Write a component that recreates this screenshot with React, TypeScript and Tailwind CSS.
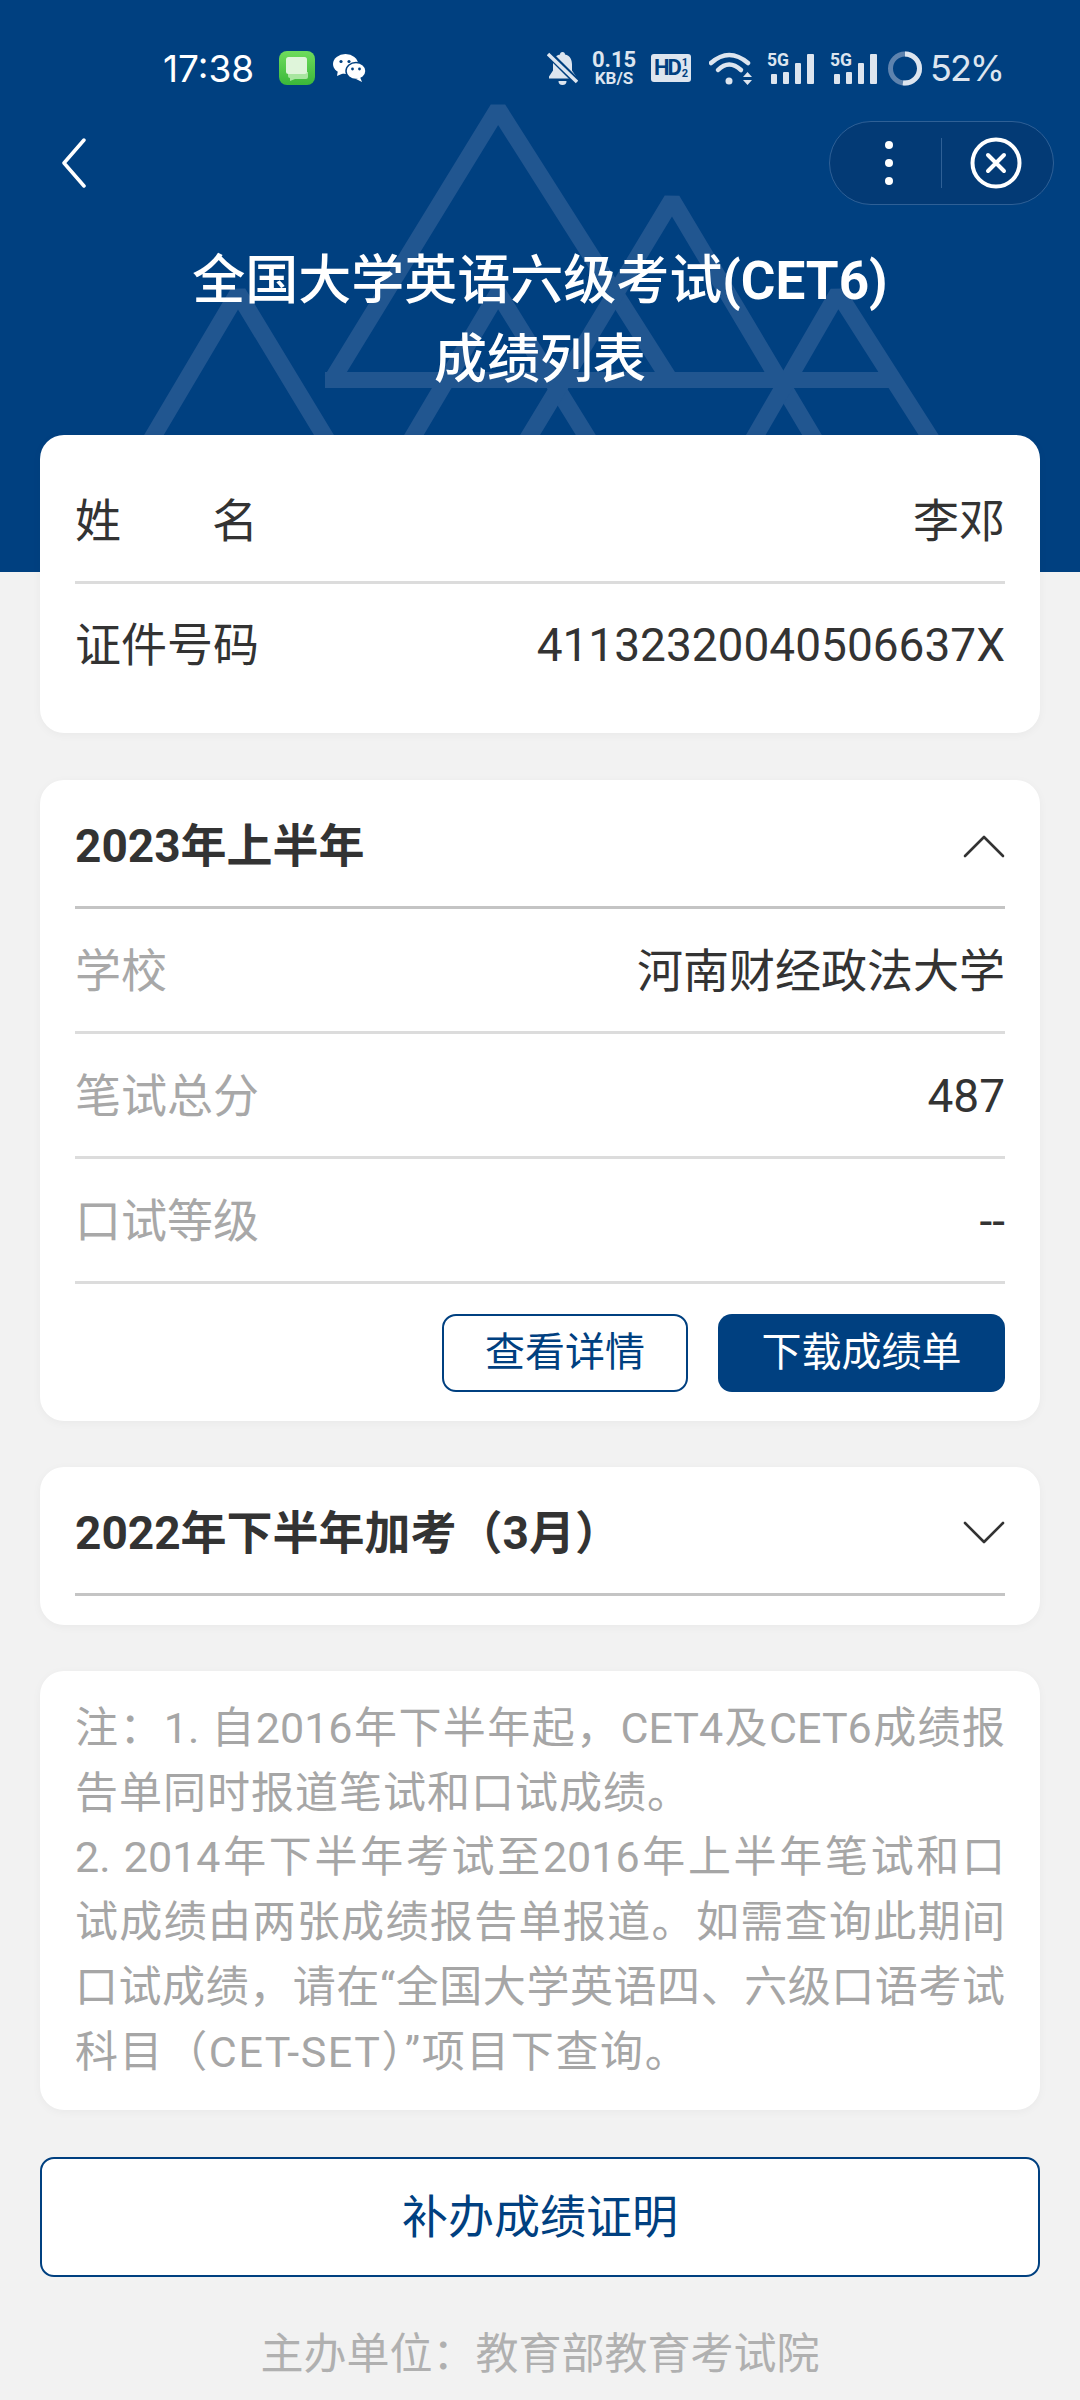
const NAVY = '#004080';

function MessageIcon() {
  return (
    <svg width="36" height="34" viewBox="0 0 36 34">
      <defs>
        <linearGradient id="msg" x1="0" y1="0" x2="0" y2="1">
          <stop offset="0" stopColor="#6fdc5c" />
          <stop offset="1" stopColor="#3bb83a" />
        </linearGradient>
      </defs>
      <rect width="36" height="34" rx="8" fill="url(#msg)" />
      <path d="M9 21 h20 v5 a2 2 0 0 1 -2 2 h-11 l-5 2 v-3 a2 2 0 0 1 -2 -2z" fill="#a8e6a0" />
      <rect x="7" y="6" width="21" height="17" rx="2.5" fill="#dff5da" />
    </svg>
  );
}

function WechatIcon() {
  return (
    <svg width="33" height="28" viewBox="0 0 33 28">
      <ellipse cx="12.5" cy="10" rx="12.5" ry="10" fill="#fff" />
      <path d="M5 16 l-1 6 l7 -3z" fill="#fff" />
      <ellipse cx="23" cy="17" rx="10" ry="8.5" fill="#fff" stroke={NAVY} strokeWidth="1.5" />
      <path d="M27 23 l2 5 l-6 -3z" fill="#fff" />
      <circle cx="8" cy="7.5" r="1.6" fill={NAVY} />
      <circle cx="16" cy="7.5" r="1.6" fill={NAVY} />
      <circle cx="19.5" cy="15" r="1.4" fill={NAVY} />
      <circle cx="26.5" cy="15" r="1.4" fill={NAVY} />
    </svg>
  );
}

function BellOffIcon() {
  return (
    <svg width="31" height="33" viewBox="0 0 31 33">
      <path d="M15.5 0 a2.5 2.5 0 0 1 2.5 2.5 c5 1 7 5 7 10 v6 l4 6 v2 h-27 v-2 l4 -6 v-6 c0 -5 2 -9 7 -10 a2.5 2.5 0 0 1 2.5 -2.5z" fill="#dde5ef" />
      <path d="M11.5 29 h8 a4 4 0 0 1 -8 0z" fill="#dde5ef" />
      <line x1="0" y1="0" x2="31" y2="31" stroke={NAVY} strokeWidth="7" />
      <line x1="1" y1="2" x2="30" y2="30" stroke="#dde5ef" strokeWidth="3.5" />
    </svg>
  );
}

function WifiIcon() {
  return (
    <svg width="43" height="33" viewBox="0 0 43 33" fill="none" stroke="#dde5ef" strokeLinecap="round">
      <path d="M2 11 Q20 -5 39 11" strokeWidth="4.5" />
      <path d="M9 18 Q20 7 32 18" strokeWidth="4.5" />
      <circle cx="20" cy="29" r="3.5" fill="#dde5ef" stroke="none" />
      <path d="M34 25 l4.5 -5 l4.5 5z M34 28 l4.5 5 l4.5 -5z" fill="#dde5ef" stroke="none" />
    </svg>
  );
}

function SignalIcon() {
  return (
    <svg className="overflow-visible" width="47" height="33" viewBox="0 0 47 33" fill="#dde5ef">
      <text x="0" y="14" fontSize="19" fontWeight="700" fontFamily="Roboto" textLength="22" lengthAdjust="spacingAndGlyphs">5G</text>
      <rect x="4" y="22" width="6" height="10" rx="1" />
      <rect x="16" y="20" width="6" height="12" rx="1" />
      <rect x="28" y="11" width="6" height="21" rx="1" />
      <rect x="40" y="2" width="7" height="30" rx="1" />
    </svg>
  );
}

function BatteryRing() {
  return (
    <svg width="34" height="35" viewBox="0 0 34 35" fill="none" strokeWidth="5">
      <circle cx="17" cy="17.5" r="14.5" stroke="#5e83ae" />
      <circle
        cx="17"
        cy="17.5"
        r="14.5"
        stroke="#dde5ef"
        strokeDasharray="47.4 91.1"
        transform="rotate(-90 17 17.5)"
      />
    </svg>
  );
}

function StatusBar() {
  return (
    <div className="flex items-center justify-between h-[48px] mt-[44px] pl-[163px] pr-[80px]">
      <div className="flex items-center">
        <span className="text-[37px] leading-none text-white font-['Inter',sans-serif] w-[116px]">17:38</span>
        <MessageIcon />
        <div className="ml-[18px]">
          <WechatIcon />
        </div>
      </div>
      <div className="flex items-center text-[#dde5ef]">
        <BellOffIcon />
        <div className="flex flex-col items-center w-[44px] ml-[14px] font-bold font-['Roboto',sans-serif]">
          <span className="text-[22px] leading-[20px]">0.15</span>
          <span className="text-[17px] leading-[17px]">KB/S</span>
        </div>
        <div className="flex items-center justify-center w-[40px] h-[28px] ml-[15px] rounded-[3px] bg-[#dde5ef] text-[#004080] font-bold font-['Roboto',sans-serif]">
          <span className="text-[22px] leading-none tracking-[-2px]">HD</span>
          <span className="flex flex-col text-[11px] leading-[11px] ml-[2px]">
            <span>1</span>
            <span>2</span>
          </span>
        </div>
        <div className="ml-[18px]">
          <WifiIcon />
        </div>
        <div className="ml-[15px]">
          <SignalIcon />
        </div>
        <div className="ml-[16px]">
          <SignalIcon />
        </div>
        <div className="ml-[11px]">
          <BatteryRing />
        </div>
        <span className="ml-[8px] w-[70px] text-[36px] leading-none tracking-[-2px] font-['Inter',sans-serif]">52%</span>
      </div>
    </div>
  );
}

function NavBar() {
  return (
    <div className="flex items-center justify-between h-[84px] mt-[29px] pl-[62px] pr-[26px]">
      <svg width="24" height="50" viewBox="0 0 24 50" fill="none" stroke="#fff" strokeWidth="3.5" strokeLinecap="round" strokeLinejoin="round">
        <path d="M22 2 L2 25 L22 48" />
      </svg>
      <div className="flex items-center w-[225px] h-[84px] rounded-full border border-[#2f6096] bg-[#033a75]">
        <div className="flex flex-col items-center gap-[10px] w-[118px] -mr-[7px]">
          <span className="w-2 h-2 rounded-full bg-white" />
          <span className="w-2 h-2 rounded-full bg-white" />
          <span className="w-2 h-2 rounded-full bg-white" />
        </div>
        <div className="w-px h-[50px] bg-[#2f6096]" />
        <svg className="ml-[28px]" width="52" height="52" viewBox="0 0 52 52" fill="none" stroke="#fff">
          <circle cx="26" cy="26" r="23.5" strokeWidth="4" />
          <path d="M18 18 L34 34 M34 18 L18 34" strokeWidth="4" strokeLinecap="round" />
        </svg>
      </div>
    </div>
  );
}

function Triangles() {
  return (
    <svg className="absolute inset-0" width="1080" height="572" viewBox="0 0 1080 572" fill="none" stroke="#215690" strokeWidth="17" strokeLinejoin="bevel">
      <path d="M148 445 L238 293 L330 445" />
      <path d="M408 445 L498 293 L592 445" />
      <path d="M332 380 L498 109 L670 380" />
      <path d="M524 445 L672 200 L818 445" />
      <path d="M750 445 L838 293 L935 445" />
      <path d="M325 380 H897" strokeWidth="16" />
    </svg>
  );
}

function Row({ label, value, muted }: { label: React.ReactNode; value: string; muted?: boolean }) {
  return (
    <div className="flex items-center justify-between h-[125px] pt-[2px] border-b-[3px] border-[#dcdcdc]">
      <span className={muted ? 'text-[#a8a8a8]' : 'text-[#333]'}>{label}</span>
      <span className="text-[#333]">{value}</span>
    </div>
  );
}

function SectionHeader({ title, open }: { title: string; open?: boolean }) {
  return (
    <div className="flex items-center justify-between h-[129px] pt-[6px] border-b-[3px] border-[#c4c4c4]">
      <span className="font-bold text-[#333]">{title}</span>
      <svg width="42" height="24" viewBox="0 0 42 24" fill="none" stroke="#333" strokeWidth="2.6" strokeLinecap="round" strokeLinejoin="round">
        <path d={open ? 'M2 22 L21 3 L40 22' : 'M2 2 L21 21 L40 2'} />
      </svg>
    </div>
  );
}

const noteLines = [
  { text: '注：1. 自2016年下半年起，CET4及CET6成绩报', cls: 'text-justify [text-align-last:justify]' },
  { text: '告单同时报道笔试和口试成绩。', cls: 'tracking-[1px]' },
  { text: '2. 2014年下半年考试至2016年上半年笔试和口', cls: 'text-justify [text-align-last:justify]' },
  { text: '试成绩由两张成绩报告单报道。如需查询此期间', cls: 'text-justify [text-align-last:justify]' },
  { text: '口试成绩，请在“全国大学英语四、六级口语考试', cls: 'text-justify [text-align-last:justify]' },
  { text: '科目（CET-SET）”项目下查询。', cls: 'tracking-[1.6px]' },
];

export default function App() {
  return (
    <div className="relative min-h-[2400px] overflow-hidden bg-[#f2f2f2] text-[46px] font-['Roboto','Noto_Sans_CJK_SC',sans-serif]">
      {/* Header */}
      <div className="relative h-[572px] overflow-hidden bg-[#004080]">
        <Triangles />
        <div className="relative">
          <StatusBar />
          <NavBar />
          <h1 className="mt-[37px] text-center text-[53px] leading-[79px] font-medium text-white">
            全国大学英语六级考试<span className="font-bold">(CET6)</span>
            <br />
            成绩列表
          </h1>
        </div>
      </div>

      <div className="relative -mt-[137px] mx-[40px] flex flex-col">
        {/* Identity */}
        <div className="rounded-[24px] bg-white px-[35px] pt-[24px] pb-[27px] shadow-[0_2px_10px_rgba(0,0,0,0.04)]">
          <Row
            label={
              <span className="flex justify-between w-[183px]">
                <span>姓</span>
                <span>名</span>
              </span>
            }
            value="李邓"
          />
          <div className="flex items-center justify-between h-[122px] text-[#333]">
            <span>证件号码</span>
            <span>41132320040506637X</span>
          </div>
        </div>

        {/* 2023 */}
        <div className="mt-[47px] rounded-[24px] bg-white px-[35px] pb-[29px] shadow-[0_2px_10px_rgba(0,0,0,0.04)]">
          <SectionHeader title="2023年上半年" open />
          <Row label="学校" value="河南财经政法大学" muted />
          <Row label="笔试总分" value="487" muted />
          <Row label="口试等级" value="--" muted />
          <div className="flex justify-end gap-[30px] mt-[30px] text-[40px]">
            <button className="flex items-center justify-center w-[246px] h-[78px] rounded-[14px] border-2 border-[#004080] text-[#004080]">
              查看详情
            </button>
            <button className="flex items-center justify-center w-[287px] h-[78px] rounded-[14px] bg-[#004080] text-white">
              下载成绩单
            </button>
          </div>
        </div>

        {/* 2022 */}
        <div className="mt-[46px] rounded-[24px] bg-white px-[35px] pb-[29px] shadow-[0_2px_10px_rgba(0,0,0,0.04)]">
          <SectionHeader title="2022年下半年加考（3月）" />
        </div>

        {/* Notes */}
        <div className="mt-[46px] rounded-[24px] bg-white px-[35px] pt-[25px] pb-[26px] text-[43px] leading-[64.7px] text-[#a6a6a6] shadow-[0_2px_10px_rgba(0,0,0,0.04)]">
          {noteLines.map((line) => (
            <div key={line.text} className={`whitespace-nowrap ${line.cls}`}>
              {line.text}
            </div>
          ))}
        </div>

        <button className="mt-[47px] h-[120px] rounded-[14px] border-2 border-[#004080] bg-white text-[#004080]">
          补办成绩证明
        </button>

        <div className="mt-[45px] text-center text-[43px] leading-[64px] text-[#b0b0b0]">
          主办单位：教育部教育考试院
        </div>
      </div>
    </div>
  );
}
